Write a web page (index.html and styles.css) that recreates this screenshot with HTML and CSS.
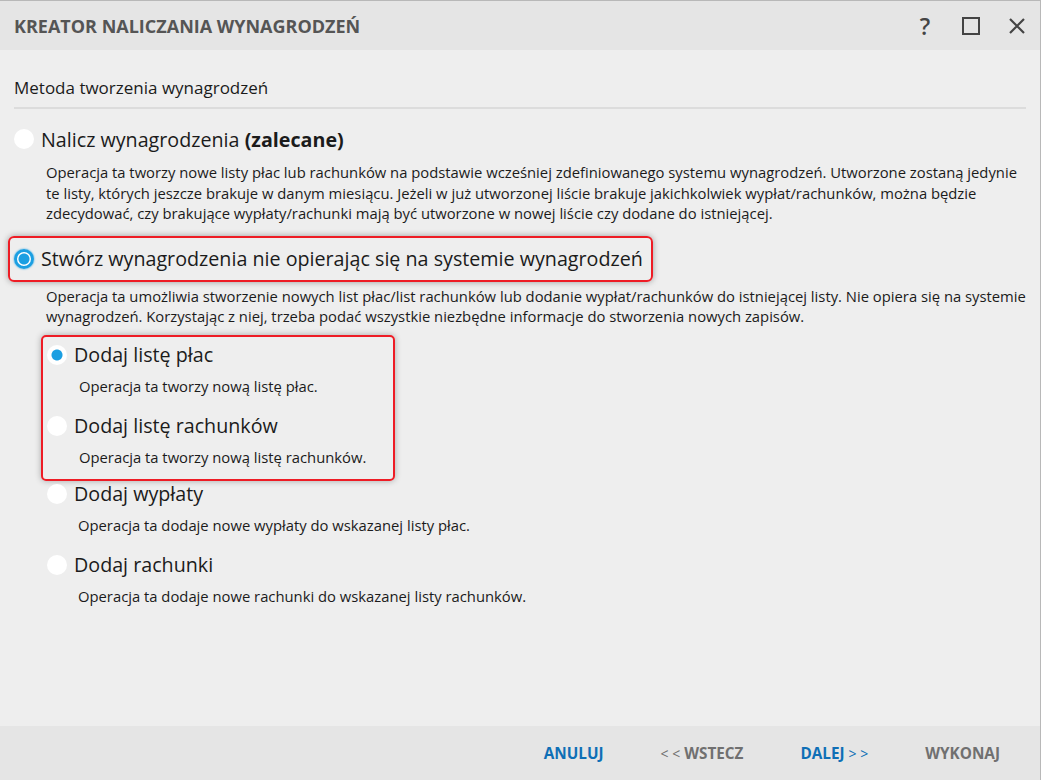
FILE: index.html
```html
<!DOCTYPE html>
<html lang="pl">
  <head>
    <meta charset="UTF-8" />
    <meta name="viewport" content="width=device-width, initial-scale=1.0" />
    <title>Kreator naliczania wynagrodzeń</title>
    <link rel="stylesheet" href="styles.css">
  </head>
  <body>
    <div id="window">
      <div id="titlebar">
        <span class="title">KREATOR NALICZANIA WYNAGRODZEŃ</span>
        <div class="tools">
          <span class="tool q">?</span>
          <span class="tool">
            <svg width="18" height="18" viewBox="0 0 18 18"><rect x="1" y="1" width="16" height="16" fill="none" stroke="#444" stroke-width="2" /></svg>
          </span>
          <span class="tool">
            <svg width="18" height="18" viewBox="0 0 18 18"><path d="M2 2 L16 16 M16 2 L2 16" stroke="#444" stroke-width="2.2" /></svg>
          </span>
        </div>
      </div>

      <div id="content">
        <div class="section">Metoda tworzenia wynagrodzeń</div>

        <div class="option first">
          <div class="label"><span class="radio"></span>Nalicz wynagrodzenia&nbsp;<b>(zalecane)</b></div>
          <p class="desc">Operacja ta tworzy nowe listy płac lub rachunków na podstawie wcześniej zdefiniowanego systemu wynagrodzeń. Utworzone zostaną jedynie te listy, których jeszcze brakuje w danym miesiącu. Jeżeli w już utworzonej liście brakuje jakichkolwiek wypłat/rachunków, można będzie zdecydować, czy brakujące wypłaty/rachunki mają być utworzone w nowej liście czy dodane do istniejącej.</p>
        </div>

        <div class="option second">
          <div class="label marked"><span class="radio on"></span>Stwórz wynagrodzenia nie opierając się na systemie wynagrodzeń</div>
          <p class="desc">Operacja ta umożliwia stworzenie nowych list płac/list rachunków lub dodanie wypłat/rachunków do istniejącej listy. Nie opiera się na systemie wynagrodzeń. Korzystając z niej, trzeba podać wszystkie niezbędne informacje do stworzenia nowych zapisów.</p>

          <div class="suboptions">
            <div class="group">
              <div class="sub">
                <div class="sublabel"><span class="dot on"></span>Dodaj listę płac</div>
                <p class="subdesc">Operacja ta tworzy nową listę płac.</p>
              </div>
              <div class="sub">
                <div class="sublabel"><span class="dot"></span>Dodaj listę rachunków</div>
                <p class="subdesc">Operacja ta tworzy nową listę rachunków.</p>
              </div>
            </div>
            <div class="sub">
              <div class="sublabel"><span class="dot"></span>Dodaj wypłaty</div>
              <p class="subdesc">Operacja ta dodaje nowe wypłaty do wskazanej listy płac.</p>
            </div>
            <div class="sub">
              <div class="sublabel"><span class="dot"></span>Dodaj rachunki</div>
              <p class="subdesc">Operacja ta dodaje nowe rachunki do wskazanej listy rachunków.</p>
            </div>
          </div>
        </div>
      </div>

      <div id="footer">
        <a href="javascript:;" class="btn blue">ANULUJ</a>
        <a href="javascript:;" class="btn gray"><span class="arr">&lt; &lt;</span> WSTECZ</a>
        <a href="javascript:;" class="btn blue">DALEJ <span class="arr">&gt; &gt;</span></a>
        <a href="javascript:;" class="btn gray">WYKONAJ</a>
      </div>
    </div>
  </body>
</html>
```

FILE: styles.css
```css
body {
  margin: 0;
  font-family: "Open Sans", "Noto Sans", sans-serif;
  color: #1b1b1b;
}
#window {
  width: 1040px;
  height: 779px;
  border-top: 1px solid #b8b8b8;
  border-right: 1px solid #b8b8b8;
  background: #eeeeee;
  display: flex;
  flex-direction: column;
}
#titlebar {
  height: 49px;
  background: #e5e5e5;
  display: flex;
  align-items: center;
  padding-left: 14px;
}
.title {
  font-size: 18px;
  font-weight: bold;
  color: #555;
  flex: 1;
}
.tools {
  display: flex;
  align-items: center;
}
.tool {
  width: 46px;
  display: flex;
  justify-content: center;
  font-size: 23px;
  color: #444;
}
.q {
  font-weight: 600;
}
#content {
  flex: 1;
  padding: 0 14px 0 8px;
}
.section {
  margin: 26px 0 0 6px;
  padding-bottom: 8px;
  font-size: 17px;
  border-bottom: 2px solid #dcdcdc;
}
.option {
  margin-top: 12px;
}
.option.first {
  margin-top: 7px;
}
.label {
  display: inline-flex;
  align-items: center;
  height: 42px;
  padding: 0 8px 0 4px;
  font-size: 19.7px;
  border: 2px solid transparent;
}
.label.marked {
  border-color: #ee1c25;
  border-radius: 6px;
  box-shadow: 0 0 6px rgba(0, 0, 0, 0.35);
}
.radio {
  width: 20px;
  height: 20px;
  border-radius: 50%;
  background: #fff;
  margin-right: 7px;
  box-sizing: border-box;
}
.radio.on {
  border: 3px solid #1b9fe2;
  background: radial-gradient(circle, #1b9fe2 5px, #fff 6px);
  box-shadow: 0 0 2px #1b9fe2;
}
.desc {
  margin: 0 0 0 38px;
  font-size: 14.8px;
  line-height: 20.5px;
}
.option.second .desc {
  margin-top: 4px;
}
.suboptions {
  margin: 8px 0 0 33px;
}
.group {
  width: 350px;
  border: 2px solid #ee1c25;
  border-radius: 5px;
  box-shadow: 0 0 6px rgba(0, 0, 0, 0.3);
}
.sub {
  padding-left: 6px;
}
.group .sub {
  padding-left: 4px;
}
.sublabel {
  display: flex;
  align-items: center;
  height: 36px;
  font-size: 19.7px;
}
.dot {
  width: 20px;
  height: 20px;
  border-radius: 50%;
  background: #fff;
  margin-right: 7px;
}
.dot.on {
  background: radial-gradient(circle, #1b9fe2 5px, #fff 6px);
}
.subdesc {
  margin: 3px 0 0 31px;
  padding-bottom: 12px;
  font-size: 14.8px;
  line-height: 20px;
}
.group .subdesc {
  margin-left: 32px;
}
.group + .sub .sublabel {
  margin-top: -5px;
}
#footer {
  height: 54px;
  background: #e5e5e5;
  display: flex;
  align-items: center;
  justify-content: flex-end;
  padding-right: 40px;
  gap: 57px;
}
.btn {
  font-size: 15.3px;
  font-weight: bold;
  text-decoration: none;
}
.blue {
  color: #0e6fb6;
}
.gray {
  color: #707070;
}
.arr {
  font-weight: normal;
  font-size: 14px;
}
```
